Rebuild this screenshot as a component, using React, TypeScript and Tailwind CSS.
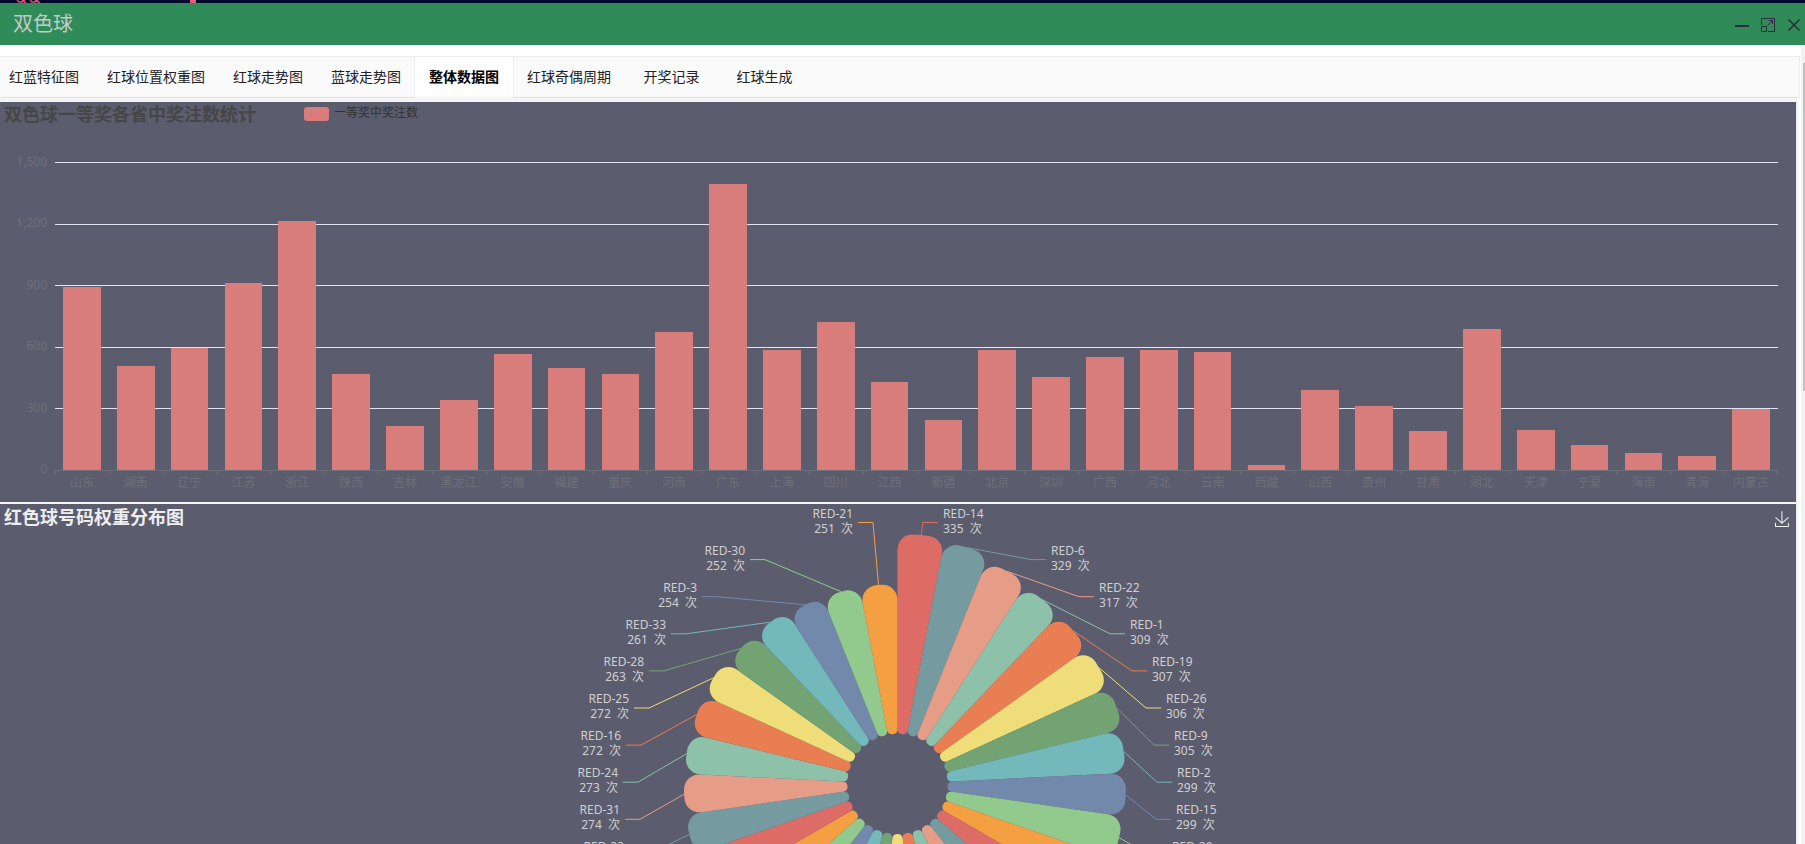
import React from "react";

const tabs = [
  "红蓝特征图",
  "红球位置权重图",
  "红球走势图",
  "蓝球走势图",
  "整体数据图",
  "红球奇偶周期",
  "开奖记录",
  "红球生成",
];

const provinces: [string, number][] = [
  ["山东", 892],
  ["湖南", 508],
  ["辽宁", 593],
  ["江苏", 912],
  ["浙江", 1214],
  ["陕西", 467],
  ["吉林", 213],
  ["黑龙江", 341],
  ["安徽", 567],
  ["福建", 498],
  ["重庆", 470],
  ["河南", 671],
  ["广东", 1393],
  ["上海", 583],
  ["四川", 720],
  ["江西", 427],
  ["新疆", 245],
  ["北京", 586],
  ["深圳", 453],
  ["广西", 550],
  ["河北", 586],
  ["云南", 573],
  ["西藏", 26],
  ["山西", 390],
  ["贵州", 312],
  ["甘肃", 190],
  ["湖北", 688],
  ["天津", 193],
  ["宁夏", 121],
  ["海南", 85],
  ["青海", 66],
  ["内蒙古", 299],
];

const yTicks = ["1,500", "1,200", "900", "600", "300", "0"];

type Ball = { id: number; count: number; elbow?: number; row?: number };

const balls: Ball[] = [
  { id: 14, count: 335, elbow: 425, row: 0 },
  { id: 6, count: 329, elbow: 533, row: 1 },
  { id: 22, count: 317, elbow: 581, row: 2 },
  { id: 1, count: 309, elbow: 612, row: 3 },
  { id: 19, count: 307, elbow: 634, row: 4 },
  { id: 26, count: 306, elbow: 648, row: 5 },
  { id: 9, count: 305, elbow: 656, row: 6 },
  { id: 2, count: 299, elbow: 659, row: 7 },
  { id: 15, count: 299, elbow: 658, row: 8 },
  { id: 20, count: 298, elbow: 654, row: 9 },
  { id: 7, count: 296 },
  { id: 17, count: 295 },
  { id: 18, count: 294 },
  { id: 32, count: 292 },
  { id: 8, count: 290 },
  { id: 5, count: 289 },
  { id: 10, count: 287 },
  { id: 12, count: 286 },
  { id: 13, count: 284 },
  { id: 11, count: 282 },
  { id: 27, count: 280 },
  { id: 4, count: 278 },
  { id: 29, count: 276 },
  { id: 23, count: 275, elbow: 146, row: 9 },
  { id: 31, count: 274, elbow: 142, row: 8 },
  { id: 24, count: 273, elbow: 140, row: 7 },
  { id: 16, count: 272, elbow: 143, row: 6 },
  { id: 25, count: 272, elbow: 151, row: 5 },
  { id: 28, count: 263, elbow: 166, row: 4 },
  { id: 33, count: 261, elbow: 188, row: 3 },
  { id: 3, count: 254, elbow: 219, row: 2 },
  { id: 30, count: 252, elbow: 267, row: 1 },
  { id: 21, count: 251, elbow: 375, row: 0 },
];

const palette = [
  "#dd6b66",
  "#759aa0",
  "#e69d87",
  "#8dc1a9",
  "#ea7e53",
  "#eedd78",
  "#73a373",
  "#73b9bc",
  "#7289ab",
  "#91ca8c",
  "#f49f42",
];

const CX = 399.5;
const CY = 280;
const INNER = 50;
const OUTER = 250;
const STEP = (2 * Math.PI) / balls.length;

const radius = (count: number) => INNER + ((OUTER - INNER) * count) / balls[0].count;

const at = (r: number, a: number) =>
  `${(CX + r * Math.sin(a)).toFixed(2)} ${(CY - r * Math.cos(a)).toFixed(2)}`;

function petal(index: number, r: number) {
  const a0 = index * STEP;
  const a1 = a0 + STEP;
  const s = Math.sin(STEP / 2);
  const ro = Math.min(15, (r * s) / (1 + s));
  const ri = (INNER * s) / (1 - s);
  const da = Math.asin(ro / (r - ro));
  const outerSide = Math.sqrt((r - ro) ** 2 - ro ** 2);
  const innerSide = Math.sqrt((INNER + ri) ** 2 - ri ** 2);
  const mid = (a0 + a1) / 2;
  return [
    `M${at(innerSide, a0)}`,
    `L${at(outerSide, a0)}`,
    `A${ro} ${ro} 0 0 1 ${at(r, a0 + da)}`,
    `A${r} ${r} 0 0 1 ${at(r, a1 - da)}`,
    `A${ro} ${ro} 0 0 1 ${at(outerSide, a1)}`,
    `L${at(innerSide, a1)}`,
    `A${ri} ${ri} 0 0 1 ${at(INNER, mid)}`,
    `A${ri} ${ri} 0 0 1 ${at(innerSide, a0)}`,
    "Z",
  ].join("");
}

function TitleBar() {
  return (
    <header className="flex h-[42px] shrink-0 items-center justify-between bg-[#2f8b57] pl-[13px] pr-1">
      <h1 className="text-[20px] leading-6 font-normal text-[#c3ccc9]">双色球</h1>
      <div className="flex items-center gap-3 pt-[2px] text-[#2e2d3c]">
        <button type="button" aria-label="最小化" className="h-[14px] w-[14px]">
          <svg viewBox="0 0 14 14" className="block h-[14px] w-[14px]">
            <path d="M0 8H14" stroke="currentColor" strokeWidth="2" />
          </svg>
        </button>
        <button type="button" aria-label="最大化" className="h-[14px] w-[14px]">
          <svg viewBox="0 0 14 14" className="block h-[14px] w-[14px]" fill="none" stroke="currentColor">
            <path d="M0.5 7V0.5H13.5V13.5H7" />
            <path d="M0.5 8.5H5.5V13.5H0.5Z" />
            <path d="M6.5 7.5L11.5 2.5M8 2.5H11.5V6" />
          </svg>
        </button>
        <button type="button" aria-label="关闭" className="h-[14px] w-[14px]">
          <svg viewBox="0 0 14 14" className="block h-[14px] w-[14px]" fill="none" stroke="currentColor" strokeWidth="1.5">
            <path d="M1.5 1.5L12.5 12.5M12.5 1.5L1.5 12.5" />
          </svg>
        </button>
      </div>
    </header>
  );
}

function TabBar() {
  return (
    <nav className="mt-[11px] mr-px flex h-[42px] shrink-0 border-y border-r border-[#eeeeee] bg-[#fafafa]">
      <div className="-ml-[5px] flex" role="tablist">
        {tabs.map((tab) =>
          tab === "整体数据图" ? (
            <button
              key={tab}
              type="button"
              role="tab"
              aria-selected="true"
              className="-mx-px h-[41px] border-x border-[#eeeeee] bg-white px-[14px] pb-[3px] text-[14px] font-bold text-black"
            >
              {tab}
            </button>
          ) : (
            <button
              key={tab}
              type="button"
              role="tab"
              aria-selected="false"
              className="h-10 min-w-[93px] px-[14px] pb-[2px] text-[14px] text-[#222222]"
            >
              {tab}
            </button>
          )
        )}
      </div>
    </nav>
  );
}

function ProvinceChart() {
  return (
    <section className="flex h-[400px] shrink-0 flex-col bg-[#5b5c6e]">
      <div className="flex h-[60px] shrink-0 gap-12 pl-1">
        <h2 className="text-[18px] leading-6 font-bold text-[#464646]">双色球一等奖各省中奖注数统计</h2>
        <div className="flex h-6 items-center gap-[5px] text-[12px] text-[#333333]">
          <span className="h-[14px] w-[25px] rounded-[3px] bg-[#d87c7c]" />
          <span className="pb-[2px]">一等奖中奖注数</span>
        </div>
      </div>
      <div className="flex h-[309px] shrink-0 pr-[18px]">
        <div className="flex w-[55px] shrink-0 flex-col justify-between pr-2 text-right text-[12px] text-[#6e7079]">
          {yTicks.map((t) => (
            <span key={t} className="flex h-0 items-center justify-end pb-[2px]">
              {t}
            </span>
          ))}
        </div>
        <div className="grid min-w-0 flex-1">
          <div className="col-start-1 row-start-1 flex flex-col justify-between">
            {yTicks.map((t) => (
              <div key={t} className={t === "0" ? "h-px bg-[#6e7079]" : "h-px bg-[#e0e6f1]"} />
            ))}
          </div>
          <div className="col-start-1 row-start-1 flex items-end pb-px">
            {provinces.map(([name, value]) => (
              <div key={name} className="flex h-full flex-1 items-end justify-center">
                <div className="w-[70%] bg-[#d87c7c]" style={{ height: `${value / 15}%` }} />
              </div>
            ))}
          </div>
        </div>
      </div>
      <div className="flex pr-[18px] pl-[55px]">
        {provinces.map(([name]) => (
          <div key={name} className="flex flex-1 flex-col text-center text-[12px] leading-4 text-[#6e7079] last:[&>i]:border-r">
            <i className="h-1 border-l border-[#6e7079]" />
            <span className="whitespace-nowrap">{name}</span>
          </div>
        ))}
      </div>
    </section>
  );
}

function RoseChart() {
  return (
    <section className="relative h-[560px] shrink-0 bg-[#5b5c6e]">
      <svg
        viewBox="0 0 800 560"
        className="mx-auto block h-[560px] w-[800px] text-[12px]"
        role="img"
        aria-label="红色球号码权重分布图"
      >
        {balls.map((ball, i) => (
          <path key={ball.id} d={petal(i, radius(ball.count))} fill={palette[i % palette.length]} />
        ))}
        {balls.map((ball, i) => {
          if (ball.elbow === undefined || ball.row === undefined) return null;
          const y = 18.5 + ball.row * 37.1;
          const dir = i < balls.length / 2 ? 1 : -1;
          const textX = ball.elbow + dir * 20;
          const anchor = dir === 1 ? "start" : "end";
          return (
            <g key={ball.id}>
              <path
                d={`M${at(radius(ball.count), (i + 0.5) * STEP)}L${ball.elbow} ${y}h${dir * 15}`}
                fill="none"
                stroke={palette[i % palette.length]}
              />
              <text x={textX} y={y - 5} textAnchor={anchor} fill="#d0d0d0">
                RED-{ball.id}
              </text>
              <text x={textX} y={y + 10} textAnchor={anchor} fill="#d0d0d0" className="whitespace-pre">
                {`${ball.count}  次`}
              </text>
            </g>
          );
        })}
      </svg>
      <div className="absolute inset-x-0 top-0 flex items-start justify-between pr-[7px] pl-1">
        <h2 className="pt-px text-[18px] leading-6 font-bold text-[#eeeeee]">红色球号码权重分布图</h2>
        <button type="button" aria-label="保存为图片" className="mt-[7px]">
          <svg viewBox="3 -1 53 61" className="block h-4 w-[14px]" fill="none" stroke="#eeeeee" strokeWidth="4">
            <path d="M4.7 22.9L29.3 45.5L54.7 23.4M4.6 43.6V58H53.8V43.6M29.2 45.1V0" />
          </svg>
        </button>
      </div>
    </section>
  );
}

export default function App() {
  return (
    <div className="flex h-screen flex-col overflow-hidden bg-white font-['Noto_Sans','Noto_Sans_CJK_SC',sans-serif]">
      <div className="flex h-[3px] shrink-0 items-start overflow-hidden bg-[#00062a]">
        <svg viewBox="0 0 200 3" className="h-[3px] w-[200px]" aria-hidden="true">
          <path
            d="M17 0L19 2H22L26 -1M22 0L26 3M30 0L32 2H35L39 -1M35 0L40 3"
            fill="none"
            stroke="#e0526c"
            strokeWidth="1.5"
          />
          <path d="M190 0H196V3H190Z" fill="#e0607a" />
        </svg>
      </div>
      <TitleBar />
      <div className="flex min-h-0 flex-1">
        <div className="flex min-w-0 flex-1 flex-col overflow-hidden">
          <TabBar />
          <main className="mr-[5px] flex flex-col gap-[2px] bg-[#f5f5f5] pt-1 shadow-[1px_0_3px_rgba(0,0,0,0.12)]">
            <ProvinceChart />
            <RoseChart />
          </main>
        </div>
        <div className="w-1 shrink-0 bg-[#f1f1f1] pt-[18px] pl-[2px]">
          <div className="h-[42%] bg-[#c1c1c1]" />
        </div>
      </div>
    </div>
  );
}
